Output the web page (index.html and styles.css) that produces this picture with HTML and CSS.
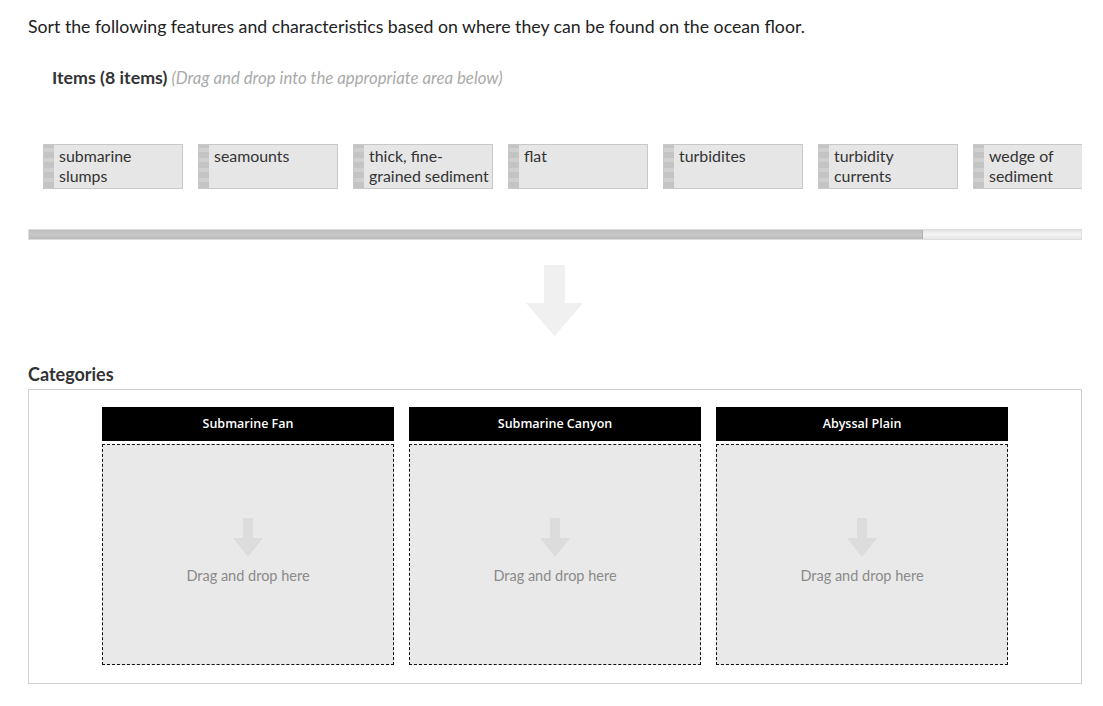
FILE: index.html
```html
<!doctype html>
<html lang="en">
  <head>
    <meta charset="UTF-8" />
    <title>Sorting activity</title>
    <link rel="stylesheet" href="styles.css">
  </head>
  <body>
    <p class="prompt">Sort the following features and characteristics based on where they can be found on the ocean floor.</p>

    <div class="items-head">
      <strong>Items (8 items)</strong> <em>(Drag and drop into the appropriate area below)</em>
    </div>

    <div class="items-scroll">
      <div class="items-row">
        <div class="item"><span class="grip"></span><span class="label">submarine slumps</span></div>
        <div class="item"><span class="grip"></span><span class="label">seamounts</span></div>
        <div class="item"><span class="grip"></span><span class="label">thick, fine-grained sediment</span></div>
        <div class="item"><span class="grip"></span><span class="label">flat</span></div>
        <div class="item"><span class="grip"></span><span class="label">turbidites</span></div>
        <div class="item"><span class="grip"></span><span class="label">turbidity currents</span></div>
        <div class="item"><span class="grip"></span><span class="label">wedge of sediment</span></div>
      </div>
    </div>
    <div class="scrollbar"><div class="thumb"></div></div>

    <div class="big-arrow">
      <svg width="58" height="72" viewBox="0 0 58 72">
        <polygon points="18,0 39,0 39,38 57,38 28.5,71 0,38 18,38" fill="#f0f0f0" />
      </svg>
    </div>

    <h2 class="cat-title">Categories</h2>
    <div class="categories">
      <div class="category">
        <div class="cat-head">Submarine Fan</div>
        <div class="drop">
          <svg width="30" height="40" viewBox="0 0 30 40"><polygon points="10,0 20,0 20,20 30,20 15,39 0,20 10,20" fill="#dcdcdc" /></svg>
          <span>Drag and drop here</span>
        </div>
      </div>
      <div class="category">
        <div class="cat-head">Submarine Canyon</div>
        <div class="drop">
          <svg width="30" height="40" viewBox="0 0 30 40"><polygon points="10,0 20,0 20,20 30,20 15,39 0,20 10,20" fill="#dcdcdc" /></svg>
          <span>Drag and drop here</span>
        </div>
      </div>
      <div class="category">
        <div class="cat-head">Abyssal Plain</div>
        <div class="drop">
          <svg width="30" height="40" viewBox="0 0 30 40"><polygon points="10,0 20,0 20,20 30,20 15,39 0,20 10,20" fill="#dcdcdc" /></svg>
          <span>Drag and drop here</span>
        </div>
      </div>
    </div>
  </body>
</html>
```

FILE: styles.css
```css
body {
  font-family: Lato, 'Open Sans', sans-serif;
  margin: 0;
  padding: 0 21px 0 28px;
  color: #222;
  background: #fff;
}
.prompt {
  font-size: 17.7px;
  margin: 16px 0 0;
  line-height: 22px;
}
.items-head {
  margin: 28px 0 0 24px;
  line-height: 22px;
}
.items-head strong {
  font-size: 17.8px;
  color: #333;
}
.items-head em {
  font-size: 16.8px;
  color: #aaa;
}
.items-scroll {
  margin-top: 55px;
  overflow: hidden;
  padding-left: 15px;
}
.items-row {
  display: flex;
  gap: 15px;
}
.item {
  flex: 0 0 140px;
  height: 45px;
  box-sizing: border-box;
  display: flex;
  background: #e6e6e6;
  border: 1px solid #c8c8c8;
}
.grip {
  width: 10px;
  flex: 0 0 10px;
  background: repeating-linear-gradient(#c4c4c4 0, #c4c4c4 3px, #cfcfcf 3px, #cfcfcf 7px, #c4c4c4 7px, #c4c4c4 10px);
}
.label {
  font-size: 15.9px;
  line-height: 20px;
  padding: 1px 2.5px 0 5px;
  color: #333;
}
.scrollbar {
  margin-top: 40px;
  height: 11px;
  background: linear-gradient(#e4e4e4, #f4f4f4 50%, #e6e6e6);
  border: 1px solid #ddd;
  box-sizing: border-box;
}
.thumb {
  width: 84.9%;
  height: 100%;
  background: linear-gradient(#bdbdbd, #c8c8c8 50%, #bcbcbc);
  border-right: 1px solid #b0b0b0;
}
.big-arrow {
  display: flex;
  justify-content: center;
  margin-top: 25px;
}
.cat-title {
  font-size: 18px;
  font-weight: bold;
  color: #333;
  margin: 26px 0 4px;
  line-height: 22px;
}
.categories {
  border: 1px solid #d0d0d0;
  display: flex;
  justify-content: center;
  gap: 15px;
  padding: 17px 0 18px;
}
.category {
  width: 292px;
}
.cat-head {
  background: #000;
  color: #fff;
  height: 34px;
  line-height: 34px;
  text-align: center;
  font-family: 'Open Sans', 'DejaVu Sans', sans-serif;
  font-size: 12.5px;
  font-weight: 600;
}
.drop {
  margin-top: 3px;
  height: 221px;
  box-sizing: border-box;
  border: 1px dashed #111;
  background: #e9e9e9;
  display: flex;
  flex-direction: column;
  align-items: center;
  padding-top: 73px;
  gap: 9px;
}
.drop span {
  font-size: 14.5px;
  color: #8a8a8a;
}
```
